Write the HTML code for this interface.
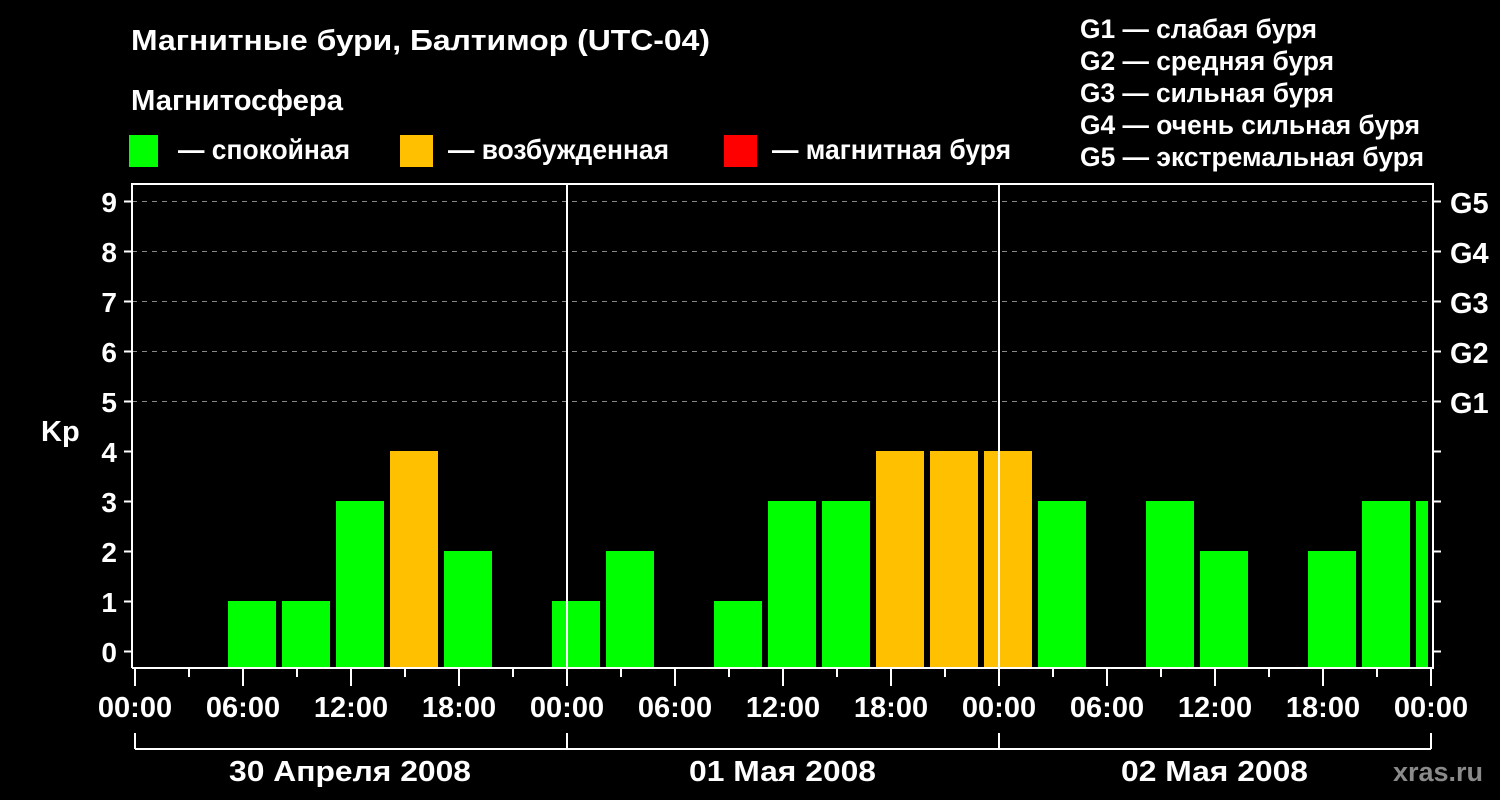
<!DOCTYPE html>
<html><head><meta charset="utf-8"><style>html,body{margin:0;padding:0;background:#000;width:1500px;height:800px;overflow:hidden}svg{display:block}text{font-family:"Liberation Sans",Arial,sans-serif;font-weight:bold;fill:#fff}</style></head><body>
<svg width="1500" height="800" viewBox="0 0 1500 800" xmlns="http://www.w3.org/2000/svg">
<rect width="1500" height="800" fill="#000"/>
<text x="131" y="50" font-size="29" textLength="579" lengthAdjust="spacingAndGlyphs">Магнитные бури, Балтимор (UTC-04)</text>
<text x="131" y="110" font-size="29" textLength="212" lengthAdjust="spacingAndGlyphs">Магнитосфера</text>
<rect x="129" y="135" width="29" height="32" fill="#00ff00"/>
<text x="178" y="159" font-size="28" textLength="172" lengthAdjust="spacingAndGlyphs">— спокойная</text>
<rect x="400" y="135" width="33" height="32" fill="#ffc000"/>
<text x="448" y="159" font-size="28" textLength="221" lengthAdjust="spacingAndGlyphs">— возбужденная</text>
<rect x="724" y="135" width="33" height="32" fill="#ff0000"/>
<text x="772" y="159" font-size="28" textLength="239" lengthAdjust="spacingAndGlyphs">— магнитная буря</text>
<g font-size="27">
<text x="1080" y="38" textLength="237" lengthAdjust="spacingAndGlyphs">G1 — слабая буря</text>
<text x="1080" y="70" textLength="254" lengthAdjust="spacingAndGlyphs">G2 — средняя буря</text>
<text x="1080" y="102" textLength="254" lengthAdjust="spacingAndGlyphs">G3 — сильная буря</text>
<text x="1080" y="134" textLength="340" lengthAdjust="spacingAndGlyphs">G4 — очень сильная буря</text>
<text x="1080" y="166" textLength="344" lengthAdjust="spacingAndGlyphs">G5 — экстремальная буря</text>
</g>
<g stroke="#888" stroke-width="1" stroke-dasharray="5,5">
<line x1="132" y1="201.5" x2="1432" y2="201.5"/><line x1="132" y1="251.5" x2="1432" y2="251.5"/><line x1="132" y1="301.5" x2="1432" y2="301.5"/><line x1="132" y1="351.5" x2="1432" y2="351.5"/><line x1="132" y1="401.5" x2="1432" y2="401.5"/>
</g>
<g>
<rect x="228" y="601" width="48" height="67" fill="#00ff00"/>
<rect x="282" y="601" width="48" height="67" fill="#00ff00"/>
<rect x="336" y="501" width="48" height="167" fill="#00ff00"/>
<rect x="390" y="451" width="48" height="217" fill="#ffc000"/>
<rect x="444" y="551" width="48" height="117" fill="#00ff00"/>
<rect x="552" y="601" width="48" height="67" fill="#00ff00"/>
<rect x="606" y="551" width="48" height="117" fill="#00ff00"/>
<rect x="714" y="601" width="48" height="67" fill="#00ff00"/>
<rect x="768" y="501" width="48" height="167" fill="#00ff00"/>
<rect x="822" y="501" width="48" height="167" fill="#00ff00"/>
<rect x="876" y="451" width="48" height="217" fill="#ffc000"/>
<rect x="930" y="451" width="48" height="217" fill="#ffc000"/>
<rect x="984" y="451" width="48" height="217" fill="#ffc000"/>
<rect x="1038" y="501" width="48" height="167" fill="#00ff00"/>
<rect x="1146" y="501" width="48" height="167" fill="#00ff00"/>
<rect x="1200" y="551" width="48" height="117" fill="#00ff00"/>
<rect x="1308" y="551" width="48" height="117" fill="#00ff00"/>
<rect x="1362" y="501" width="48" height="167" fill="#00ff00"/>
<rect x="1416" y="501" width="12" height="167" fill="#00ff00"/>
</g>
<g stroke="#fff" stroke-width="2" fill="none">
<polyline points="132,668 132,184 1433,184 1433,668 132,668"/>
<line x1="567" y1="184" x2="567" y2="668"/><line x1="999" y1="184" x2="999" y2="668"/>
</g>
<g stroke="#fff" stroke-width="2">
<line x1="124" y1="201.5" x2="132" y2="201.5"/><line x1="124" y1="251.5" x2="132" y2="251.5"/><line x1="124" y1="301.5" x2="132" y2="301.5"/><line x1="124" y1="351.5" x2="132" y2="351.5"/><line x1="124" y1="401.5" x2="132" y2="401.5"/><line x1="124" y1="451.5" x2="132" y2="451.5"/><line x1="124" y1="501.5" x2="132" y2="501.5"/><line x1="124" y1="551.5" x2="132" y2="551.5"/><line x1="124" y1="601.5" x2="132" y2="601.5"/><line x1="124" y1="651.5" x2="132" y2="651.5"/>
<line x1="1433" y1="201.5" x2="1441" y2="201.5"/><line x1="1433" y1="251.5" x2="1441" y2="251.5"/><line x1="1433" y1="301.5" x2="1441" y2="301.5"/><line x1="1433" y1="351.5" x2="1441" y2="351.5"/><line x1="1433" y1="401.5" x2="1441" y2="401.5"/><line x1="1433" y1="451.5" x2="1441" y2="451.5"/><line x1="1433" y1="501.5" x2="1441" y2="501.5"/><line x1="1433" y1="551.5" x2="1441" y2="551.5"/><line x1="1433" y1="601.5" x2="1441" y2="601.5"/><line x1="1433" y1="651.5" x2="1441" y2="651.5"/>
<line x1="135" y1="668" x2="135" y2="686"/><line x1="189" y1="668" x2="189" y2="677"/><line x1="243" y1="668" x2="243" y2="686"/><line x1="297" y1="668" x2="297" y2="677"/><line x1="351" y1="668" x2="351" y2="686"/><line x1="405" y1="668" x2="405" y2="677"/><line x1="459" y1="668" x2="459" y2="686"/><line x1="513" y1="668" x2="513" y2="677"/><line x1="567" y1="668" x2="567" y2="686"/><line x1="621" y1="668" x2="621" y2="677"/><line x1="675" y1="668" x2="675" y2="686"/><line x1="729" y1="668" x2="729" y2="677"/><line x1="783" y1="668" x2="783" y2="686"/><line x1="837" y1="668" x2="837" y2="677"/><line x1="891" y1="668" x2="891" y2="686"/><line x1="945" y1="668" x2="945" y2="677"/><line x1="999" y1="668" x2="999" y2="686"/><line x1="1053" y1="668" x2="1053" y2="677"/><line x1="1107" y1="668" x2="1107" y2="686"/><line x1="1161" y1="668" x2="1161" y2="677"/><line x1="1215" y1="668" x2="1215" y2="686"/><line x1="1269" y1="668" x2="1269" y2="677"/><line x1="1323" y1="668" x2="1323" y2="686"/><line x1="1377" y1="668" x2="1377" y2="677"/><line x1="1431" y1="668" x2="1431" y2="686"/>
</g>
<g font-size="28" text-anchor="end">
<text x="117" y="212">9</text><text x="117" y="262">8</text><text x="117" y="312">7</text><text x="117" y="362">6</text><text x="117" y="412">5</text><text x="117" y="462">4</text><text x="117" y="512">3</text><text x="117" y="562">2</text><text x="117" y="612">1</text><text x="117" y="662">0</text>
</g>
<text x="41" y="441" font-size="29">Kp</text>
<g font-size="29">
<text x="1450" y="213">G5</text><text x="1450" y="263">G4</text><text x="1450" y="313">G3</text><text x="1450" y="363">G2</text><text x="1450" y="413">G1</text>
</g>
<g font-size="29" text-anchor="middle">
<text x="135" y="717">00:00</text><text x="243" y="717">06:00</text><text x="351" y="717">12:00</text><text x="459" y="717">18:00</text><text x="567" y="717">00:00</text><text x="675" y="717">06:00</text><text x="783" y="717">12:00</text><text x="891" y="717">18:00</text><text x="999" y="717">00:00</text><text x="1107" y="717">06:00</text><text x="1215" y="717">12:00</text><text x="1323" y="717">18:00</text><text x="1431" y="717">00:00</text>
</g>
<g font-size="29">
<text x="229" y="781" textLength="242" lengthAdjust="spacingAndGlyphs">30 Апреля 2008</text><text x="689" y="781" textLength="187" lengthAdjust="spacingAndGlyphs">01 Мая 2008</text><text x="1121" y="781" textLength="187" lengthAdjust="spacingAndGlyphs">02 Мая 2008</text>
</g>
<g stroke="#fff" stroke-width="2">
<line x1="135" y1="749" x2="1431" y2="749"/>
<line x1="135" y1="733" x2="135" y2="749"/><line x1="567" y1="733" x2="567" y2="749"/><line x1="999" y1="733" x2="999" y2="749"/><line x1="1431" y1="733" x2="1431" y2="749"/>
</g>
<text x="1483" y="781" font-size="27" style="fill:#8a8a8a" text-anchor="end">xras.ru</text>
</svg>
</body></html>
